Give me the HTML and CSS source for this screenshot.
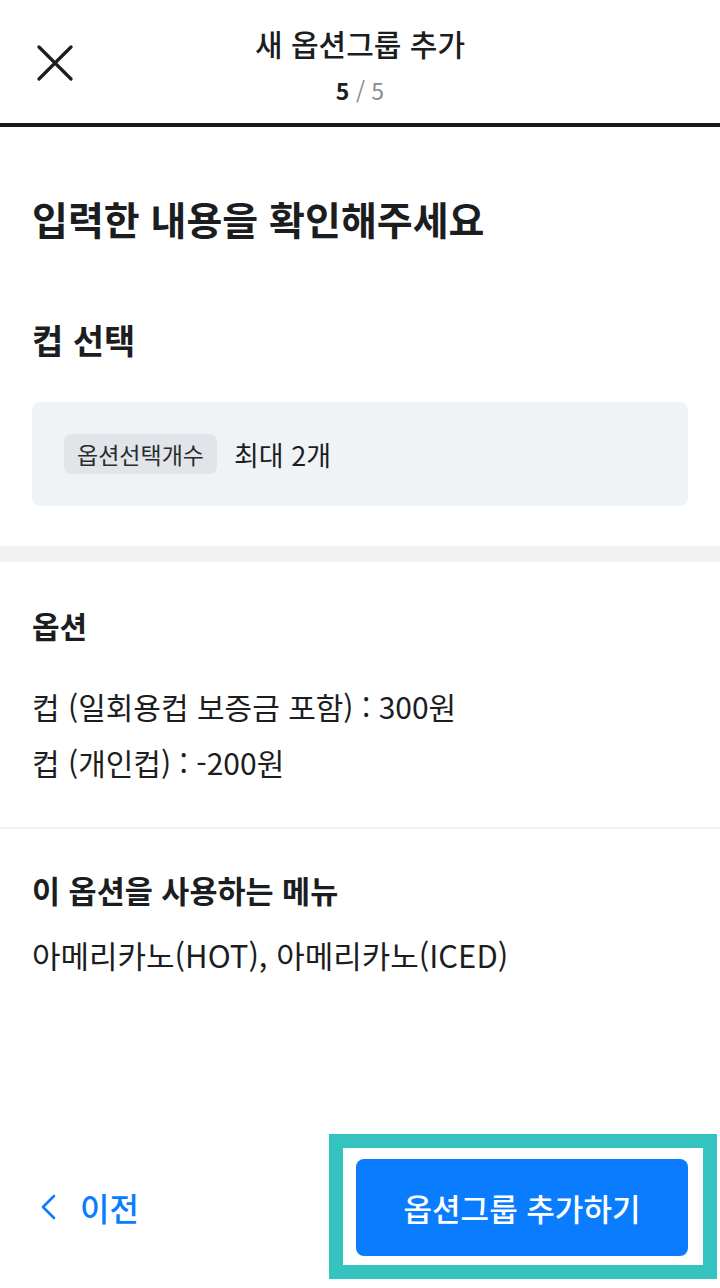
FILE: index.html
```html
<!DOCTYPE html>
<html lang="ko">
<head>
<meta charset="utf-8">
<title>새 옵션그룹 추가</title>
<link rel="stylesheet" href="styles.css">
</head>
<body>
<div class="page">
  <header class="header">
    <button class="close" aria-label="닫기">
      <svg width="36" height="36" viewBox="0 0 36 36"><path d="M2 2 L34 34 M34 2 L2 34" stroke="#1c1d1f" stroke-width="3.2" stroke-linecap="round" fill="none"/></svg>
    </button>
    <div class="title-wrap">
      <div class="title">새 옵션그룹 추가</div>
      <div class="step"><b>5</b><span class="slash"> / 5</span></div>
    </div>
  </header>

  <main class="main">
    <section class="intro">
      <h1 class="h1">입력한 내용을 확인해주세요</h1>
      <h2 class="h2">컵 선택</h2>
      <div class="summary">
        <span class="tag">옵션선택개수</span>
        <span class="summary-val">최대 2개</span>
      </div>
    </section>
    <div class="band"></div>
    <section class="options">
      <h3 class="h3">옵션</h3>
      <p class="line first">컵 (일회용컵 보증금 포함) : 300원</p>
      <p class="line">컵 (개인컵) : -200원</p>
    </section>
    <div class="thin"></div>
    <section class="menus">
      <h3 class="h3">이 옵션을 사용하는 메뉴</h3>
      <p class="menu-text">아메리카노(HOT), 아메리카노(ICED)</p>
    </section>
  </main>

  <footer class="footer">
    <button class="prev">
      <svg width="16" height="26" viewBox="0 0 16 26"><path d="M14 2 L3 13 L14 24" stroke="#0a7cff" stroke-width="2.6" fill="none" stroke-linecap="round" stroke-linejoin="round"/></svg>
      <span>이전</span>
    </button>
    <div class="highlight">
      <button class="primary">옵션그룹 추가하기</button>
    </div>
  </footer>
</div>
</body>
</html>
```

FILE: styles.css
```css
* { box-sizing: border-box; }
html, body { margin: 0; padding: 0; background: #fff; }
body {
  font-family: "Noto Sans CJK KR", "Noto Sans", sans-serif;
  color: #1c1d1f;
}
.page {
  width: 720px;
  height: 1288px;
  display: flex;
  flex-direction: column;
}
.header {
  height: 127px;
  border-bottom: 4px solid #1a1a1a;
  position: relative;
  display: flex;
  justify-content: center;
}
.close {
  position: absolute;
  left: 37px;
  top: 45px;
  width: 36px;
  height: 36px;
  padding: 0;
  border: 0;
  background: none;
}
.close svg { display: block; }
.title-wrap {
  display: flex;
  flex-direction: column;
  align-items: center;
  padding-top: 21px;
}
.title {
  font-size: 30px;
  font-weight: 500;
  line-height: 44px;
}
.step {
  margin-top: 10px;
  font-size: 23px;
  line-height: 30px;
}
.step b { font-weight: 700; color: #1c1d1f; }
.slash { color: #8a8a8a; }

.main { flex: 1; }
.intro { padding: 67px 32px 40px; }
.h1 {
  margin: 0;
  font-size: 39px;
  font-weight: 700;
  line-height: 48px;
}
.h2 {
  margin: 78px 0 0;
  font-size: 34px;
  font-weight: 700;
  line-height: 40px;
}
.summary {
  margin-top: 42px;
  background: #f0f3f6;
  border-radius: 8px;
  height: 104px;
  padding: 0 32px;
  display: flex;
  align-items: center;
  gap: 17px;
}
.tag {
  background: #e1e5e9;
  border-radius: 7px;
  height: 40px;
  padding: 0 13px;
  display: inline-flex;
  align-items: center;
  font-size: 23px;
  color: #2a2b2d;
}
.summary-val { font-size: 27px; }
.band { height: 16px; background: #f1f1f1; }
.options { padding: 43px 32px 37px; }
.h3 {
  margin: 0;
  font-size: 30px;
  font-weight: 700;
  line-height: 40px;
}
.line {
  margin: 0;
  font-size: 30px;
  line-height: 56px;
}
.line.first { margin-top: 33px; }
.thin { height: 2px; background: #f0f0f0; }
.menus { padding: 41px 32px 0; }
.menus .h3 { font-size: 30.5px; }
.menu-text {
  margin: 25px 0 0;
  font-size: 31px;
  line-height: 40px;
}

.footer {
  display: flex;
  align-items: center;
  justify-content: space-between;
  padding: 0 3px 9px 40px;
}
.prev {
  display: flex;
  align-items: center;
  gap: 24px;
  padding: 0;
  border: 0;
  background: none;
  color: #0a7cff;
  font-family: inherit;
  font-size: 32px;
  font-weight: 500;
}
.prev svg { display: block; }
.highlight {
  border: 14px solid #35c3bf;
  padding: 11px 15px 9px 13px;
  background: #fff;
}
.primary {
  display: block;
  width: 332px;
  height: 97px;
  border: 0;
  border-radius: 8px;
  background: #0a7cff;
  color: #fff;
  font-family: inherit;
  font-size: 31px;
  font-weight: 500;
}
```
